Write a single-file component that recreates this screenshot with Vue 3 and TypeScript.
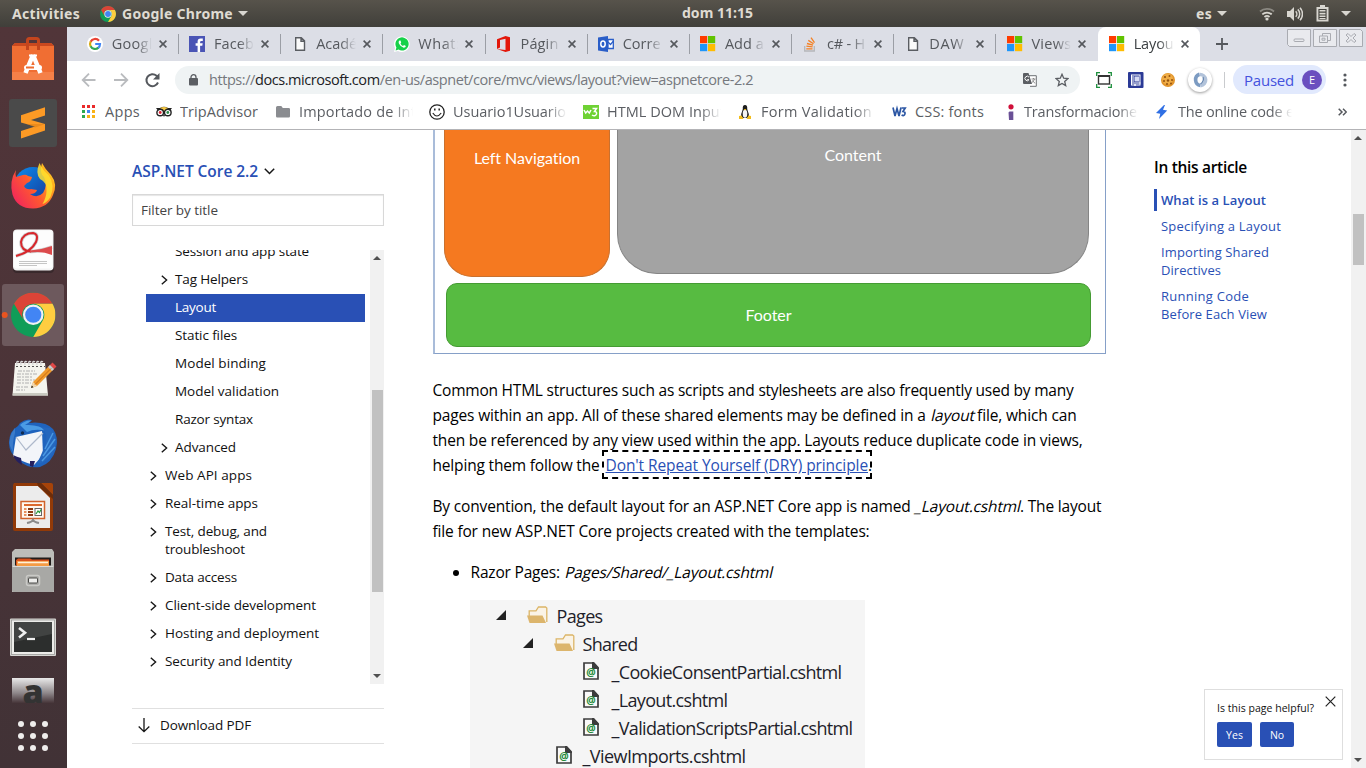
<script setup lang="ts">
interface Tab { icon: string; title: string; w: number; active?: boolean }
interface Bookmark { icon: string; text: string; w: number; cell: number; fade?: boolean }
interface TocRow { lines: { t: string; w: number }[]; arrow?: boolean; level: number; selected?: boolean }
interface FileRow { kind: 'folder' | 'file'; name: string; w: number; depth: number }

// Spreads a run of text over a given width by adjusting its letter spacing.
const vFit = {
  mounted(el: HTMLElement, binding: { value: number }) {
    const n = (el.textContent ?? '').length
    const natural = el.getBoundingClientRect().width
    if (n > 0) el.style.letterSpacing = `${((binding.value - natural) / n).toFixed(3)}px`
  },
}

const tabs: Tab[] = [
  { icon: 'google', title: 'Googl', w: 41 },
  { icon: 'facebook', title: 'Faceb', w: 40 },
  { icon: 'page', title: 'Acadé', w: 41 },
  { icon: 'whatsapp', title: 'What:', w: 42 },
  { icon: 'office', title: 'Págin', w: 38 },
  { icon: 'outlook', title: 'Corre', w: 38 },
  { icon: 'ms', title: 'Add a', w: 39 },
  { icon: 'stack', title: 'c# - H', w: 38 },
  { icon: 'page', title: 'DAW', w: 35 },
  { icon: 'ms', title: 'Views', w: 40 },
  { icon: 'ms', title: 'Layou', w: 40, active: true },
]

const bookmarks: Bookmark[] = [
  { icon: 'apps', text: 'Apps', w: 35, cell: 75 },
  { icon: 'trip', text: 'TripAdvisor', w: 78, cell: 119 },
  { icon: 'dir', text: 'Importado de Int', w: 117, cell: 154, fade: true },
  { icon: 'smile', text: 'Usuario1Usuario', w: 113, cell: 154, fade: true },
  { icon: 'w3green', text: 'HTML DOM Input', w: 118, cell: 154, fade: true },
  { icon: 'linux', text: 'Form Validation', w: 111, cell: 154, fade: true },
  { icon: 'w3', text: 'CSS: fonts', w: 69, cell: 109 },
  { icon: 'info', text: 'Transformacione', w: 113, cell: 154, fade: true },
  { icon: 'bolt', text: 'The online code e', w: 116, cell: 154, fade: true },
]

const toc: TocRow[] = [
  { lines: [{ t: 'Session and app state', w: 134 }], level: 3 },
  { lines: [{ t: 'Tag Helpers', w: 73 }], level: 3, arrow: true },
  { lines: [{ t: 'Layout', w: 41 }], level: 3, selected: true },
  { lines: [{ t: 'Static files', w: 62 }], level: 3 },
  { lines: [{ t: 'Model binding', w: 91 }], level: 3 },
  { lines: [{ t: 'Model validation', w: 104 }], level: 3 },
  { lines: [{ t: 'Razor syntax', w: 78 }], level: 3 },
  { lines: [{ t: 'Advanced', w: 61 }], level: 3, arrow: true },
  { lines: [{ t: 'Web API apps', w: 87 }], level: 2, arrow: true },
  { lines: [{ t: 'Real-time apps', w: 93 }], level: 2, arrow: true },
  { lines: [{ t: 'Test, debug, and', w: 102 }, { t: 'troubleshoot', w: 80 }], level: 2, arrow: true },
  { lines: [{ t: 'Data access', w: 72 }], level: 2, arrow: true },
  { lines: [{ t: 'Client-side development', w: 151 }], level: 2, arrow: true },
  { lines: [{ t: 'Hosting and deployment', w: 154 }], level: 2, arrow: true },
  { lines: [{ t: 'Security and Identity', w: 127 }], level: 2, arrow: true },
  { lines: [{ t: 'Performance', w: 76 }], level: 2, arrow: true },
]

const article = [
  { lines: [{ t: 'What is a Layout', w: 105 }], active: true },
  { lines: [{ t: 'Specifying a Layout', w: 120 }] },
  { lines: [{ t: 'Importing Shared', w: 108 }, { t: 'Directives', w: 60 }] },
  { lines: [{ t: 'Running Code', w: 88 }, { t: 'Before Each View', w: 106 }] },
]

const files: FileRow[] = [
  { kind: 'folder', name: 'Pages', w: 46, depth: 0 },
  { kind: 'folder', name: 'Shared', w: 55, depth: 1 },
  { kind: 'file', name: '_CookieConsentPartial.cshtml', w: 230, depth: 2 },
  { kind: 'file', name: '_Layout.cshtml', w: 116, depth: 2 },
  { kind: 'file', name: '_ValidationScriptsPartial.cshtml', w: 241, depth: 2 },
  { kind: 'file', name: '_ViewImports.cshtml', w: 163, depth: 1 },
]
</script>

<template>
  <div class="desktop">
    <svg class="defs" width="0" height="0">
      <symbol id="chrome" viewBox="2 2 44 44">
        <circle cx="24" cy="24" r="22" fill="#0f9d58" />
        <path d="M24 13H43.05A22 22 0 0 0 4.95 13L14.5 29.5A11 11 0 0 1 24 13z" fill="#db4437" />
        <path d="M43.05 13A22 22 0 0 1 24 46L33.5 29.5A11 11 0 0 0 24 13z" fill="#ffcd40" />
        <circle cx="24" cy="24" r="10.2" fill="#f1f1f1" />
        <circle cx="24" cy="24" r="8" fill="#4285f4" />
      </symbol>
      <symbol id="x" viewBox="0 0 8 8"><path d="M.6.6l6.8 6.8M7.4.6L.6 7.4" stroke="currentColor" stroke-width="1.6" /></symbol>
    </svg>

    <header class="topbar">
      <span class="activities"><span v-fit="68">Activities</span></span>
      <svg class="tb-chrome" width="16" height="16"><use href="#chrome" /></svg>
      <span class="appname"><span v-fit="111">Google Chrome</span></span>
      <i class="tri"></i>
      <span class="clock"><span v-fit="71">dom 11:15</span></span>
      <div class="status">
        <span v-fit="16">es</span>
        <i class="tri t1"></i>
        <svg class="wifi" width="16" height="14" viewBox="0 0 16 14" fill="none" stroke-width="1.8">
          <path d="M1 4.5a10.5 10.5 0 0 1 14 0" stroke="#8b8982" /><path d="M3.3 7.4a7 7 0 0 1 9.4 0" stroke="#d8d6d0" /><path d="M5.5 10a3.8 3.8 0 0 1 5 0" stroke="#d8d6d0" /><circle cx="8" cy="12" r="1.6" fill="#d8d6d0" />
        </svg>
        <svg class="sound" width="16" height="16" viewBox="0 0 16 16" fill="none" stroke="#d8d6d0" stroke-width="1.5">
          <path d="M0 5h3l4-4v14l-4-4H0z" fill="#d8d6d0" stroke="none" /><path d="M8.7 5.2a4 4 0 0 1 0 5.6M10.8 3.4a6.5 6.5 0 0 1 0 9.2M13 1.8a9 9 0 0 1 0 12.4" />
        </svg>
        <svg class="batt" width="13" height="17" viewBox="0 0 13 17">
          <path d="M4 0h5v2h3.5v14.5H.5V2H4z" fill="#d8d6d0" /><path d="M2.4 4h8.2v10.6H2.4z" fill="#45443f" /><path d="M3.5 5h6v1.6h-6zM3.5 7.8h6v1.6h-6zM3.5 10.500h6v1.600h-6zM3.500 13h6v1h-6z" fill="#d8d6d0" />
        </svg>
        <i class="tri t2"></i>
      </div>
    </header>

    <div class="body">
      <aside class="launcher">
        <svg width="67" height="64" viewBox="0 0 67 64">
          <path d="M12 19l3-3h36l3 3v34H12z" fill="#f06e33" /><path d="M12 19l3-3h36l3 3z" fill="#c9481f" /><path d="M12 45h42v8H12z" fill="#f58048" />
          <path d="M27.500 23V13.500q0-2 2-2h7q2 0 2 2V23" fill="none" stroke="#c4451d" stroke-width="3" />
          <path d="M33 28l-7.500 18M33 28l7.500 18" stroke="#fff" stroke-width="4.500" fill="none" /><path d="M29 28.500h8" stroke="#fff" stroke-width="2" /><rect x="24" y="38" width="18" height="5" rx="2.500" fill="#fff" /><path d="M26 40.500h8" stroke="#ef6c31" stroke-width="2" />
        </svg>
        <svg width="67" height="64" viewBox="0 0 67 64">
          <rect x="9" y="8" width="48" height="48" rx="3" fill="#4a4a4a" />
          <path d="M21 24.300L45 16.300v8.200L31 29l14 4v6.500L21 47.500v-7.500l14-4.500L21 31.500z" fill="#fc9a25" /><path d="M27 33l18 0-10 3.500z" fill="#d97b14" opacity=".5" />
        </svg>
        <svg width="67" height="64" viewBox="0 0 67 64">
          <defs>
            <linearGradient id="ffx" x1="0" y1=".8" x2="1" y2=".1"><stop offset="0" stop-color="#f0255d" /><stop offset=".45" stop-color="#ff5a2e" /><stop offset=".8" stop-color="#ffb01d" /><stop offset="1" stop-color="#ffe63a" /></linearGradient>
            <linearGradient id="ffb" x1="0" y1="0" x2="1" y2="1"><stop offset="0" stop-color="#0a8df0" /><stop offset="1" stop-color="#19318f" /></linearGradient>
          </defs>
          <circle cx="33" cy="31" r="19" fill="url(#ffb)" />
          <path d="M16 15q-1 4 0 7l7-2q3-1 5 1l4 1q-1 5-5 6l-3 3q2 4 7 3l6 1q-1 4-7 4 7 5 13-1 5-8 1-16-5-4-2-14 3 6 9 12 7 9 2 20-5 13-20 13.500-16 0-20.500-14Q9 26 16 15z" fill="url(#ffx)" />
          <path d="M39.500 8q3 7 9 12 7 10 2 22-4 6-8 7 4-7 4-13Q47 27 40 24q-5-6-.5-16z" fill="#ffdf2f" opacity=".85" />
        </svg>
        <svg width="67" height="64" viewBox="0 0 67 64">
          <rect x="13" y="12" width="41" height="42" rx="4" fill="#261d20" opacity=".5" /><rect x="13" y="10.500" width="40.500" height="41" rx="4" fill="#f3f3f3" /><rect x="14" y="11.500" width="38.500" height="38" rx="3" fill="#fdfdfd" />
          <path d="M16 37q15-4 20-14 3-8-3-9-10 0-12 9 0 9 10 9.500 8 0 21-4.500" fill="none" stroke="#cfcfcf" stroke-width="3.500" /><path d="M16 37q15-4 20-14 3-8-3-9-10 0-12 9 0 9 10 9.500" fill="none" stroke="#d8262b" stroke-width="2" /><path d="M30 31.500q11-.5 22-4.500v9q-10-4.500-22-2.500z" fill="#dc4a4c" />
          <path d="M19 42.500h28M19 44.500h28M19 46.500h18" stroke="#c5c5c5" stroke-width="1" />
        </svg>
        <svg width="67" height="64" viewBox="0 0 67 64">
          <rect x="2" y="1" width="62" height="62" rx="3" fill="#6d595d" /><circle cx="4.700" cy="32" r="3" fill="#e95420" />
          <use href="#chrome" x="11" y="9.500" width="44.500" height="44.500" />
        </svg>
        <svg width="67" height="64" viewBox="0 0 67 64">
          <path d="M15 16h30l3 32.500H12.500z" fill="#f4f4ee" /><path d="M12.500 48.500L13 46h35v2.500z" fill="#c9c9c0" />
          <path d="M17 18q-1-5 2-3M21 18q-1-5 2-3M25 18q-1-5 2-3M29 18q-1-5 2-3M33 18q-1-5 2-3M37 18q-1-5 2-3M41 18q-1-5 2-3" stroke="#d9d9d9" stroke-width="1.400" fill="none" /><path d="M16 19.500h29" stroke="#555" stroke-dasharray="2 2" />
          <path d="M18 24h17M17 27h20M17 30h16M17 33h18M17 36h14M16 40h12M16 43h9" stroke="#a8a8a8" stroke-width=".9" stroke-dasharray="4 1 2 1" />
          <path d="M31 41l2-6 17-17 4 4-17 17z" fill="#f09a2c" /><path d="M31 41l2-6 4 4z" fill="#f1d9b0" /><path d="M31 41l.8-2.500 1.700 1.700z" fill="#222" /><path d="M50 18l2.500-2.500 4 4L54 22z" fill="#e04848" /><path d="M48 20l2-2 4 4-2 2z" fill="#c5cbd2" /><path d="M35 37.500l16-16" stroke="#c86a10" />
        </svg>
        <svg width="67" height="64" viewBox="0 0 67 64">
          <path d="M20 12q6-5 12-3-1 2-3 3 16-2 24 6 6 8 3 20-4 14-16 18-12 2-22-7Q9 42 9 32q0-12 9-17z" fill="#1f63bd" /><path d="M20 14q5-5 11-4.500-3 3-6 4.500 14-1 22 6-12-3-20 1z" fill="#4a9be4" />
          <path d="M15 22q-3 10-2 19l-3-6q-2-9 5-18z" fill="#3b7ccb" />
          <path d="M16 26l26-6 1 24-9 10q-12-3-21-9z" fill="#f3f5f9" /><path d="M16 26l10 13 17-17" fill="none" stroke="#aeb9cb" stroke-width="1.200" /><path d="M41 16q8 6 4 19l-8 18q14-2 18-16 3-14-5-20z" fill="#2567be" /><path d="M53 22l-8 16M55 28L43 45M55 36L42 50" stroke="#4a98e2" stroke-width="1.500" /><path d="M13 44q4 2 8 3l1 7q-7-4-9-10zM30 50l5 0-2 6-3-1z" fill="#242060" /><circle cx="22.500" cy="22" r="1.700" fill="#102b50" />
        </svg>
        <svg width="67" height="64" viewBox="0 0 67 64">
          <path d="M14 8h26l13 13v33q0 2-2 2H15q-2 0-2-2V10z" fill="#923a08" /><path d="M41 8h10q2 0 2 2v10z" fill="#a64309" /><path d="M16 11h22l12 12v30H16z" fill="#ececec" /><path d="M38 11l-1-3h4l12 12v4z" fill="#6d2c08" />
          <rect x="21" y="26.500" width="23.500" height="17" fill="#fff8ef" stroke="#d0622b" stroke-width="1.500" /><path d="M24 30h18" stroke="#dc6a2e" stroke-width="2" /><path d="M24 34h2.500M24 37h2.500M24 40h2.500" stroke="#e8905f" stroke-width="2" /><path d="M28 34h5M28 37h5M28 40h5" stroke="#8d3a12" stroke-width="2" /><rect x="35" y="33.500" width="6.500" height="7" fill="#fff" stroke="#666" /><path d="M36 39l2-3 1.500 1.500 1.500-3" stroke="#279b38" fill="none" stroke-width="1.200" /><path d="M33 44v2M27 48q5-1 6-3 1 2 6 3" stroke="#8a8a8a" stroke-width="2" fill="none" />
        </svg>
        <svg width="67" height="64" viewBox="0 0 67 64">
          <path d="M12 13l3-3h37l2 3v40H12z" fill="#bdbdb9" /><path d="M15 18.500h36v8H15z" fill="#201c1a" /><path d="M16 21l2-1.500h12l2 1h17v6H16z" fill="#d9531e" /><path d="M17 22h32v5H17z" fill="#f49b45" /><path d="M18 23.500h30" stroke="#fff0d9" stroke-width="1.500" /><path d="M12 27h42v24q0 2-2 2H14q-2 0-2-2z" fill="#a8a8a5" /><path d="M12.500 27.500h41" stroke="#d9d9d7" />
          <rect x="26.500" y="36.500" width="13" height="10" rx="2" fill="#a5a5a2" stroke="#c9c9c6" stroke-width="1.500" /><rect x="28.500" y="39" width="9" height="5" rx="1" fill="#ededeb" stroke="#4c4c4a" />
        </svg>
        <svg width="67" height="64" viewBox="0 0 67 64">
          <rect x="10" y="15.500" width="46" height="37.500" rx="1" fill="#d6d6d2" /><rect x="11.500" y="17" width="43" height="34.500" fill="#ecece9" stroke="#9b9b98" stroke-width=".8" /><rect x="14" y="19" width="38" height="30" fill="#2c2e2d" /><path d="M14 19h38v12L14 39z" fill="#414342" />
          <path d="M19 25l6 4.700-6 4.700" stroke="#f0f0f0" stroke-width="2.600" fill="none" /><path d="M27 36h8" stroke="#f0f0f0" stroke-width="2.200" />
        </svg>
        <div class="amazon"><span>a</span></div>
        <svg class="grid9" width="67" height="36" viewBox="0 0 67 36" fill="#efedec"><template v-for="r in 3" :key="r"><circle v-for="c in 3" :key="c" :cx="9 + c * 12" :cy="r * 12 - 6" r="3" /></template></svg>
      </aside>

      <main class="browser">
        <div class="tabstrip">
          <div v-for="(t, i) in tabs" :key="i" class="tab" :class="{ active: t.active, bare: i >= 9 }">
            <svg class="fav" width="16" height="16" viewBox="0 0 16 16">
              <template v-if="t.icon === 'google'"><circle cx="8" cy="8" r="8" fill="#fff" /><g fill="none" stroke-width="2.200"><path d="M12 4.800A5 5 0 0 0 3.600 5.800" stroke="#ea4335" /><path d="M3.700 5.500a5 5 0 0 0 0 5" stroke="#d8a90e" /><path d="M3.600 10.300a5 5 0 0 0 7.900 1.300" stroke="#34a853" /><path d="M8.200 8h4.800q0 2.500-1.700 3.800" stroke="#4285f4" /></g></template>
              <template v-else-if="t.icon === 'facebook'"><path d="M0 0h16v16H0z" fill="#4a54b5" /><path d="M8.600 16V9.800H6.600V7.300h2V5.500q0-3 3-3h2.200v2.400h-1.400q-1.300 0-1.300 1.200v1.200h2.600l-.4 2.500h-2.200V16z" fill="#fff" /></template>
              <path v-else-if="t.icon === 'page'" d="M3.700 1.700h5.600l3.200 3.200v9.400H3.700zM9 1.700v3.500h3.500" fill="#fafafa" stroke="#5a5d62" stroke-width="1.400" />
              <template v-else-if="t.icon === 'whatsapp'"><path d="M0 16l1-4A7.800 7.800 0 1 1 4 15z" fill="#fff" /><path d="M1.600 14.400l.8-3A6.600 6.600 0 1 1 4.600 13.600z" fill="#16d149" /><path d="M5.500 4.500q-1.500 1-.6 3 1.600 3.500 4.800 4.300 2 0 2.200-1.800L10 9l-1 1Q7.500 9.500 6.500 7.500L7.200 6.600 6.500 4.500z" fill="#fff" /></template>
              <path v-else-if="t.icon === 'office'" d="M1 3.300L9.500 0 14 1.300v13.400L9.500 16 1 13l8.500 1V2.800L4 4v7.500L1 13z" fill="#e3170a" />
              <template v-else-if="t.icon === 'outlook'"><path d="M0 1.500L10 0v16L0 14.500z" fill="#2a5ec8" /><ellipse cx="5" cy="8" rx="2.200" ry="2.900" fill="none" stroke="#fff" stroke-width="1.500" /><path d="M10 3.500h5.300v9H10z" fill="#fff" stroke="#2a5ec8" stroke-width="1.300" /><path d="M10 6l2.500 2.500L15.500 5" fill="none" stroke="#2a5ec8" stroke-width="1.200" /></template>
              <template v-else-if="t.icon === 'ms'"><path d="M0 0h7.200v7.200H0z" fill="#ff3c00" /><path d="M8 0h7.200v7.200H8z" fill="#61c300" /><path d="M0 8h7.200v7.200H0z" fill="#1e96fa" /><path d="M8 8h7.200v7.200H8z" fill="#ffbc00" /></template>
              <template v-else><path d="M1.700 10v5h9.600v-5" fill="none" stroke="#b5b7ba" stroke-width="1.300" /><path d="M3.300 12.800h6.200M3.400 10.200l6.200.7M4 7.500l6 1.700M5.300 4.400l5.200 3.400M8 1.700l3.500 5" stroke="#f48024" stroke-width="1.300" /></template>
            </svg>
            <span class="title"><span v-fit="t.w">{{ t.title }}</span></span>
            <svg class="close" width="8" height="8"><use href="#x" /></svg>
          </div>
          <svg class="plus" width="12" height="12" viewBox="0 0 12 12"><path d="M6 0v12M0 6h12" stroke="#55585d" stroke-width="1.800" /></svg>
          <div class="winbtns">
            <svg width="24" height="18" viewBox="0 0 24 18"><path d="M.5.500h23v17H2.500l-2-2z" /><rect x="7" y="10" width="10" height="2.500" rx="1" /></svg>
            <svg width="24" height="18" viewBox="0 0 24 18"><path d="M.5.500h23v17H.500z" /><path d="M9.500 4.500h8v7h-3M6.500 7h8v6.500h-8zM9 9.200h3v2h-3zM9.500 4.500V7" /></svg>
            <svg width="24" height="18" viewBox="0 0 24 18"><path d="M.5.500h21l2 2v15H.5z" /><path d="M7 6l2-1.500 3 3 3-3L17 6l-3 3 3 3-2 1.500-3-3-3 3L7 12l3-3z" /></svg>
          </div>
        </div>

        <div class="toolbar">
          <svg class="nav" width="80" height="16" viewBox="0 0 80 16" fill="none" stroke="#b9bbbe" stroke-width="1.800"><path d="M14.500 8H2M8 1.700L1.700 8 8 14.300" /><path d="M33 8h13M40 1.700L46.300 8 40 14.300" /><path d="M77 10.500A6 6 0 1 1 75.500 3.700L77.500 6" stroke="#55585d" stroke-width="2" /><path d="M78.500 1v6.500H72z" fill="#55585d" stroke="none" /></svg>
          <div class="omnibox">
            <svg class="lock" width="9" height="12" viewBox="0 0 9 12"><rect y="4" width="9" height="7.500" rx="1" fill="#5b5e63" /><path d="M2 5V3.200a2.500 2.500 0 0 1 5 0V5" fill="none" stroke="#5b5e63" stroke-width="1.300" /></svg>
            <span class="url"><span v-fit="544">https://<b>docs.microsoft.com</b>/en-us/aspnet/core/mvc/views/layout?view=aspnetcore-2.2</span></span>
            <svg class="translate" width="14" height="14" viewBox="0 0 14 14"><path d="M5.500 2.700h7.800v10.600H7" fill="#fff" stroke="#6d7074" /><path d="M0 1q0-1 1-1h4.500L9 11H1q-1 0-1-1z" fill="#5b5e63" /><path d="M6 4.200A2.200 2.200 0 1 0 6 6.700H4.200" fill="none" stroke="#fff" /><path d="M8.500 6h4M10.500 5v1M11.500 6q-.5 2-3 4M9.500 7.500q1 2 2.700 2.700" stroke="#777" fill="none" stroke-width=".8" /></svg>
            <svg class="star" width="14" height="14" viewBox="0 0 14 14"><path d="M7 1.300l1.700 3.900 4.200.4-3.200 2.800 1 4.200L7 10.400l-3.700 2.200 1-4.200L1.100 5.600l4.200-.4z" fill="none" stroke="#5b5e63" stroke-width="1.300" /></svg>
          </div>
          <svg class="e1" width="16" height="16" viewBox="0 0 16 16" fill="none"><path d="M.7 4V.7H4M12 .7h3.300V4M.7 12v3.300H4M12 15.300h3.300V12" stroke="#1c8f3c" stroke-width="1.300" /><rect x="2.500" y="4" width="11" height="8" stroke="#333" stroke-width="1.400" /><path d="M2 4h12" stroke="#333" stroke-width="2" /></svg>
          <svg class="e2" width="16" height="16" viewBox="0 0 16 16"><rect width="15.500" height="16" rx="1" fill="#2b3a96" /><rect x="3.500" y="3" width="8.500" height="10" fill="none" stroke="#fff" /><path d="M3 11h9.500M5 4v6" stroke="#fff" /><path d="M6.500 4.500H11v5H6.500z" fill="#d6daf2" /><path d="M7 12v2" stroke="#fff" stroke-width="1.500" /></svg>
          <svg class="e3" width="16" height="16" viewBox="0 0 16 16"><circle cx="8" cy="8" r="7" fill="#e2952c" /><circle cx="7.500" cy="7" r="5.500" fill="#efac45" /><g fill="#95520f"><circle cx="5" cy="5" r="1.100" /><circle cx="9.500" cy="4" r="1" /><circle cx="4" cy="9" r="1" /><circle cx="8" cy="8.500" r="1.200" /><circle cx="12" cy="8" r="1" /><circle cx="7" cy="12" r="1" /><circle cx="11" cy="11.500" r="1" /></g></svg>
          <div class="e4"><svg width="16" height="16" viewBox="0 0 16 16" fill="none" stroke-width="3.600"><path d="M8.500 13.500A5.800 5.800 0 0 1 7.500 2.300" stroke="#7c9bc2" /><path d="M7.500 2.500a5.600 5.600 0 0 1 1 11.200" stroke="#b2c3da" /><path d="M11 5q1.500 4-2.500 7" stroke="#6383ae" stroke-width="1.200" /></svg></div>
          <i class="vsep"></i>
          <div class="paused"><span class="ptext"><span v-fit="50">Paused</span></span><span class="avatar">E</span></div>
          <svg class="dots" width="4" height="14" viewBox="0 0 4 14" fill="#55585d"><circle cx="2" cy="2" r="1.600" /><circle cx="2" cy="7" r="1.600" /><circle cx="2" cy="12" r="1.600" /></svg>
        </div>

        <div class="bookmarks">
          <div v-for="b in bookmarks" :key="b.text" class="bm" :style="{ width: b.cell + 'px' }">
            <svg class="bicon" width="16" height="16" viewBox="0 0 16 16">
              <template v-if="b.icon === 'apps'"><path d="M1 1h3v3H1zM6 1h3v3H6zM11 1h3v3h-3z" fill="#ea2a2a" /><path d="M1 6h3v3H1zM1 11h3v3H1z" fill="#2da94f" /><path d="M6 6h3v3H6z" fill="#4285f4" /><path d="M11 6h3v3h-3zM6 11h3v3H6zM11 11h3v3h-3z" fill="#f9b215" /></template>
              <template v-else-if="b.icon === 'trip'"><path d="M0 4h4q4-2.500 8 0h4l-1.500 2h-13z" fill="#222" /><path d="M4 4q4-2 8 0L8 8z" fill="#f6c945" /><g fill="#fff" stroke="#222" stroke-width="1.400"><circle cx="4.200" cy="8.500" r="3.300" /><circle cx="11.800" cy="8.500" r="3.300" /></g><circle cx="4.200" cy="8.500" r="1.400" fill="#d23" /><circle cx="11.800" cy="8.500" r="1.400" fill="#2a8a4a" /><path d="M7 11h2l-1 2z" fill="#222" /></template>
              <path v-else-if="b.icon === 'dir'" d="M1 3.500Q1 2 2.500 2h3.800l1.500 2h6Q15 4 15 5.300v7Q15 13.500 13.700 13.500H2.300Q1 13.500 1 12.300z" fill="#8a8c90" />
              <g v-else-if="b.icon === 'smile'" fill="none" stroke="#222"><circle cx="8" cy="8" r="7.200" stroke-width="1.300" /><path d="M3.800 9q4 6 8.400 0" stroke-width="1.200" /><path d="M5.800 4.500v2M10.200 4.500v2" stroke-width="1.500" /></g>
              <template v-else-if="b.icon === 'w3green'"><path d="M0 1h16v14H0z" fill="#6fd234" /><path d="M1 6l1.700 3L4.500 7l1.800 2L8 6M9.500 4.500h4l-2 3q2.500 0 2 2.500-1.500 3-4.500 1" fill="none" stroke="#fff" stroke-width="1.500" /></template>
              <template v-else-if="b.icon === 'linux'"><path d="M8 1q2.600 0 2.200 4 .5 2 1.600 5 .5 3-2.200 4H6.400q-2.700-1-2.200-4 1.100-3 1.600-5Q5.400 1 8 1z" fill="#1d1d1d" /><ellipse cx="8" cy="9.800" rx="2.300" ry="4" fill="#f4f4f4" /><path d="M6.700 5L8 6.500 9.500 5zM2 12l2.500-.5 2 3.500H2zM14 12l-2.500-.5-2 3.500H14z" fill="#f3bd1b" /></template>
              <g v-else-if="b.icon === 'w3'" fill="none" stroke="#2b56a4" stroke-width="1.700"><path d="M2 3.500l2 8.500L6 4.500l2 7.500L10 3.500" /><path d="M10.500 4h3.700L12 7.500q2.300 0 2 2.300-.9 2.700-3.400 1.200" /></g>
              <template v-else-if="b.icon === 'info'"><circle cx="11" cy="2.800" r="2.600" fill="#d0103a" /><path d="M8.500 8.500l1-1h3.800V16H9z" fill="#6a5096" /></template>
              <path v-else d="M10 1L2 9l4.300.7L5 15l8.200-8.500-4.200-.7L11 1z" fill="#2f6fe4" />
            </svg>
            <span class="btext" :class="{ fade: b.fade }"><span v-fit="b.w">{{ b.text }}</span></span>
          </div>
          <svg class="more" width="9" height="8" viewBox="0 0 9 8"><path d="M.7.700L4 4 .7 7.300M5 .7L8.300 4 5 7.300" fill="none" stroke="#55585d" stroke-width="1.500" /></svg>
        </div>

        <div class="page">
          <nav class="side">
            <div class="version"><span v-fit="126">ASP.NET Core 2.2</span><svg width="11" height="7" viewBox="0 0 11 7"><path d="M.8.800l4.700 4.700L10.200.8" fill="none" stroke="#171717" stroke-width="1.500" /></svg></div>
            <div class="filter"><span v-fit="77">Filter by title</span></div>
            <div class="tocbox">
              <div class="toc">
                <div v-for="(r, i) in toc" :key="i" class="row" :class="['l' + r.level, { sel: r.selected }]">
                  <svg v-if="r.arrow" class="chev" width="7" height="10" viewBox="0 0 7 10"><path d="M.8.800L5.600 5 .8 9.200" fill="none" stroke="#171717" stroke-width="1.400" /></svg>
                  <div v-for="l in r.lines" :key="l.t" class="ln"><span v-fit="l.w">{{ l.t }}</span></div>
                </div>
              </div>
              <div class="sbar"><i class="up"></i><i class="thumb"></i><i class="down"></i></div>
            </div>
            <div class="pdf"><svg width="12" height="15" viewBox="0 0 12 15"><path d="M6 0v13.500M.7 8.500L6 13.700l5.300-5.200" fill="none" stroke="#171717" stroke-width="1.300" /></svg><span v-fit="91">Download PDF</span></div>
          </nav>

          <article class="content">
            <div class="diagram">
              <div class="upper">
                <div class="leftnav"><span v-fit="106">Left Navigation</span></div>
                <div class="main"><span v-fit="57">Content</span></div>
              </div>
              <div class="footer"><span v-fit="46">Footer</span></div>
            </div>
            <p>
              <span v-fit="641">Common HTML structures such as scripts and stylesheets are also frequently used by many</span><br>
              <span v-fit="644">pages within an app. All of these shared elements may be defined in a <em>layout</em> file, which can</span><br>
              <span v-fit="650">then be referenced by any view used within the app. Layouts reduce duplicate code in views,</span><br>
              <span class="pre" v-fit="169">helping them follow the</span><a><span v-fit="262.5">Don't Repeat Yourself (DRY) principle</span></a><span>.</span>
            </p>
            <p>
              <span v-fit="669">By convention, the default layout for an ASP.NET Core app is named <em>_Layout.cshtml</em>. The layout</span><br>
              <span v-fit="437">file for new ASP.NET Core projects created with the templates:</span>
            </p>
            <ul>
              <li><span v-fit="301">Razor Pages: <em>Pages/Shared/_Layout.cshtml</em></span></li>
            </ul>
            <div class="files">
              <div v-for="f in files" :key="f.name" class="file" :class="'d' + f.depth">
                <template v-if="f.kind === 'folder'">
                  <svg class="ftri" width="10" height="10" viewBox="0 0 10 10"><path d="M10 0v10H0z" fill="#222" /></svg>
                  <svg class="fold" width="21" height="18" viewBox="0 0 21 18"><path d="M2.200 10V4.800h6.800L11.500 1h7l1.300 1v14" fill="#faf3e6" stroke="#dcb567" stroke-width="1.300" /><path d="M0 9.500h15.500L19 17H2.500z" fill="#dcb56c" /></svg>
                </template>
                <svg v-else class="doc" width="16" height="18" viewBox="0 0 16 18"><path d="M1 1h9l5 5v11H1z" fill="#f9f9f9" stroke="#3c3c3c" stroke-width="1.700" /><path d="M9 0h2l5 5.500V7H9z" fill="#3c3c3c" /><text x="8" y="13.500" text-anchor="middle" font-size="10.500" font-weight="700" font-family="Open Sans, sans-serif" fill="#23893a">@</text></svg>
                <span v-fit="f.w">{{ f.name }}</span>
              </div>
            </div>
          </article>

          <aside class="inthis">
            <h3><span v-fit="93">In this article</span></h3>
            <div v-for="(a, i) in article" :key="i" class="art" :class="{ on: a.active }"><div v-for="l in a.lines" :key="l.t" class="ln"><span v-fit="l.w">{{ l.t }}</span></div></div>
          </aside>

          <div class="pbar"><i class="up"></i><i class="thumb"></i><i class="down"></i></div>

          <div class="helpful">
            <div class="q"><span v-fit="97">Is this page helpful?</span></div>
            <div class="btns"><button class="yes">Yes</button><button>No</button></div>
            <svg class="hx" width="11" height="11" viewBox="0 0 11 11"><path d="M.7.700l9.600 9.600M10.300.7L.7 10.300" stroke="#222" stroke-width="1.200" /></svg>
          </div>
        </div>
      </main>
    </div>
  </div>
</template>

<style>
html, body { margin: 0; overflow: hidden; }
</style>

<style scoped>
.desktop { width: 1366px; height: 768px; overflow: hidden; display: flex; flex-direction: column; background: #fff; font-family: "Open Sans", "Noto Sans", sans-serif; white-space: nowrap; }
.desktop * { box-sizing: border-box; }
.desktop svg { display: block; flex: none; }
.desktop span { flex: none; }
.desktop .defs { position: absolute; }
.topbar { position: relative; height: 27px; flex: none; display: flex; align-items: center; background: linear-gradient(#57534b, #403f3a); color: #dfdbd2; font: 700 14px/26px "Noto Sans", sans-serif; padding-left: 12px; }
.activities { width: 88px; }
.tb-chrome { margin-right: 6px; }
.appname { width: 116px; }
.tri { border: 5px solid transparent; border-top-color: #d8d6d0; border-bottom: 0; flex: none; }
.clock { position: absolute; left: 682px; top: 0; }
.status { position: absolute; left: 1196px; top: 0; height: 27px; display: flex; align-items: center; }
.t1 { margin-left: 5px; }
.wifi { margin-left: 32px; }
.sound { margin-left: 12px; }
.batt { margin-left: 13px; }
.t2 { margin-left: 12px; }
.body { display: flex; flex: 1; min-height: 0; }
.launcher { width: 67px; flex: none; background: linear-gradient(#513539, #4b3438 50%, #413236); display: flex; flex-direction: column; overflow: hidden; }
.amazon { width: 42px; height: 25px; margin: 11px 0 0 12px; overflow: hidden; background: linear-gradient(#e9e9e9, #8e878a 60%, #463539); font: 800 34px/34px "Open Sans", sans-serif; color: #333; text-align: center; flex: none; }
.amazon span { display: block; margin-top: -4px; }
.desktop .grid9 { margin-top: 15px; }
.browser { flex: 1; min-width: 0; display: flex; flex-direction: column; }
.tabstrip { height: 34px; flex: none; display: flex; background: #dcdee6; padding-left: 9.250px; position: relative; }
.tab { width: 102.200px; flex: none; height: 34px; display: flex; align-items: center; padding-left: 11px; position: relative; color: #55585d; font-size: 14.500px; }
.tab::after { content: ""; position: absolute; right: -.5px; top: 7px; width: 1px; height: 20px; background: #9b9ea5; }
.tab.bare::after { display: none; }
.tab.active { background: #fff; border-radius: 8px 8px 0 0; color: #3c4043; }
.title { width: 40px; margin-left: 8.500px; overflow: hidden; line-height: 24px; mask-image: linear-gradient(90deg, #000 62%, transparent); }
.title span, .btext span { display: inline-block; }
.close { margin-left: 7px; color: #55585d; }
.plus { margin: 11px 0 0 15.500px; }
.winbtns { position: absolute; left: 1220px; top: 2px; display: flex; gap: 2px; }
.winbtns svg { fill: #e9eaee; stroke: #a9abb1; }
.toolbar { height: 37px; flex: none; position: relative; display: flex; align-items: center; padding-left: 14px; }
.omnibox { margin-left: 14px; width: 905px; height: 28px; border-radius: 14px; background: #eff3f4; display: flex; align-items: center; padding-left: 14px; }
.url { margin-left: 11px; width: 814px; color: #75787d; font-size: 14.500px; line-height: 26px; }
.url b { font-weight: 400; color: #202124; }
.star { margin-left: 18px; }
.e1 { margin-left: 16px; }
.e2 { margin-left: 15.500px; }
.e3 { margin-left: 16.500px; }
.e4 { margin-left: 12px; width: 24px; height: 24px; border-radius: 50%; background: #fff; box-shadow: 0 1px 3px #0006; display: flex; align-items: center; justify-content: center; }
.vsep { width: 1px; height: 16px; background: #c9cbce; margin-left: 12px; }
.paused { margin-left: 8px; width: 93px; height: 29px; border-radius: 15px; background: #e1e9fd; display: flex; align-items: center; color: #4452dd; font-size: 15px; }
.ptext { width: 58px; margin-left: 11px; }
.avatar { width: 20px; height: 20px; border-radius: 50%; background: #6a4fbf; color: #fff; font-size: 11px; line-height: 20px; text-align: center; }
.dots { margin-left: 17px; }
.bookmarks { height: 31px; flex: none; display: flex; align-items: center; padding-left: 14px; color: #5b5e63; font-size: 14.500px; position: relative; padding-bottom: 4px; }
.bm { display: flex; align-items: center; flex: none; }
.btext { margin-left: 8px; overflow: hidden; line-height: 26px; }
.fade { width: 114px; mask-image: linear-gradient(90deg, #000 82%, transparent); }
.more { position: absolute; left: 1271px; top: 10px; }
.page { flex: 1; min-height: 0; border-top: 1px solid #b3b3b6; position: relative; display: flex; overflow: hidden; color: #111; }
.page span { display: inline-block; }
.side { width: 252px; margin-left: 65px; flex: none; }
.version { height: 64px; padding-top: 29px; display: flex; align-items: flex-start; color: #2950b5; font: 600 15.500px/24px "Open Sans", sans-serif; }
.version svg { margin: 9px 0 0 6px; }
.filter { height: 32px; border: 1px solid #d8d8d8; box-shadow: inset 0 1px 1px #e6e6e6; padding-left: 8px; font-size: 13.500px; line-height: 31px; color: #444; }
.tocbox { margin-top: 24px; height: 434px; display: flex; overflow: hidden; font-size: 13.500px; }
.toc { width: 238px; margin-top: -12px; }
.row { position: relative; line-height: 18px; padding: 4px 0 6px; }
.ln { height: 18px; }
.l3 { padding-left: 29px; margin-left: 14px; margin-right: 5px; }
.l2 { padding-left: 33px; }
.sel { background: #2950b5; color: #fff; }
.chev { position: absolute; top: 9px; left: 18px; }
.l3 .chev { left: 15px; }
.sbar, .pbar { position: relative; background: #f1f1f1; width: 14px; }
.sbar i, .pbar i { position: absolute; }
.up { border: 4.500px solid transparent; border-bottom-color: #505050; border-top: 0; top: 6px; left: 3px; }
.down { border: 4.500px solid transparent; border-top-color: #505050; border-bottom: 0; bottom: 6px; left: 3px; }
.thumb { background: #c1c1c1; left: 2px; width: 11px; top: 140px; height: 202px; }
.pdf { margin-top: 24px; height: 36px; border-top: 1px solid #e0e0e0; border-bottom: 1px solid #e0e0e0; display: flex; align-items: center; padding: 0 0 2px 6px; font-size: 13.500px; }
.pdf svg { margin-right: 10px; }
.content { width: 673px; margin-left: 48.500px; flex: none; font-size: 15.500px; line-height: 25px; color: #000; }
.diagram { height: 225px; margin-top: -1px; border: 1px solid #86a0c8; border-top: 0; border-left-width: 2px; border-left-color: #a9bcd9; padding: 0 0 0 9.500px; color: #fff; font: 16px/20px Lato, sans-serif; }
.upper { display: flex; height: 154px; }
.leftnav { width: 166px; height: 148px; background: #f57920; border: 1px solid #c9712f; border-top: 0; border-radius: 0 0 28px 28px; text-align: center; padding-top: 19px; }
.main { width: 472px; height: 145px; margin-left: 7px; background: #a3a3a3; border: 1px solid #858585; border-top: 0; border-radius: 0 0 40px 40px; text-align: center; padding-top: 16px; }
.footer { margin-left: 2px; width: 645px; height: 64px; background: #57bb41; border: 1px solid #459b33; border-radius: 11px; text-align: center; line-height: 62px; }
.content p { margin: 24px 0 16px; }
.content p + p { margin-top: 16px; }
em { font-style: normal; display: inline-block; transform: skewX(-13deg); transform-origin: 0 76%; }
.pre { width: 173px; }
.content a { color: #2950b5; outline: 2px dashed #000; outline-offset: 2px; display: inline-block; height: 21px; margin-top: 1px; vertical-align: top; line-height: 23px; }
.content a span { text-decoration: underline; }
.content ul { margin: 0 0 15px; padding-left: 38px; }
.files { margin-left: 37px; width: 395px; height: 180px; background: #f5f5f5; padding-top: 3px; font-size: 18px; color: #1e1e2a; }
.file { height: 28px; display: flex; align-items: center; padding-left: 26px; line-height: 26px; padding-bottom: 2px; }
.file.d1 { padding-left: 53px; }
.file.d2 { padding-left: 113px; }
.file.d1 .doc { margin-left: 33px; }
.fold { margin: -2px 9px 0 21px; }
.ftri { margin-top: -2px; }
.file.d1 .fold { margin-right: 8px; }
.doc { margin-right: 13px; margin-top: -2px; }
.file.d1 .doc { margin-right: 11px; }
.inthis { margin-left: 48.500px; width: 150px; font-size: 13px; color: #2950b5; }
.inthis h3 { margin: 25px 0 10px; font: 600 15.500px/24px "Open Sans", sans-serif; color: #000; }
.art { padding: 0 0 0 7px; margin: 4px 0 8px; line-height: 18px; }
.art.on { border-left: 3px solid #2950b5; padding: 2px 0 2px 4px; font-weight: 600; margin: 4px 0 6px; }
.pbar { position: absolute; right: 0; top: 0; width: 15px; height: 638px; }
.pbar .thumb { top: 84px; height: 51px; }
.helpful { position: absolute; left: 1137px; top: 559px; width: 139px; height: 71px; background: #fff; border: 1px solid #dedede; padding: 10px 0 0 12px; font-size: 10.500px; }
.q { line-height: 16px; height: 16px; }
.btns { display: flex; gap: 8px; margin-top: 6px; }
.btns button { width: 34px; height: 25px; border: 0; padding: 0; border-radius: 2px; background: #2950b5; color: #fff; font: 10.500px "Open Sans", sans-serif; }
.btns .yes { width: 35px; }
.hx { position: absolute; right: 6px; top: 6px; }
</style>
